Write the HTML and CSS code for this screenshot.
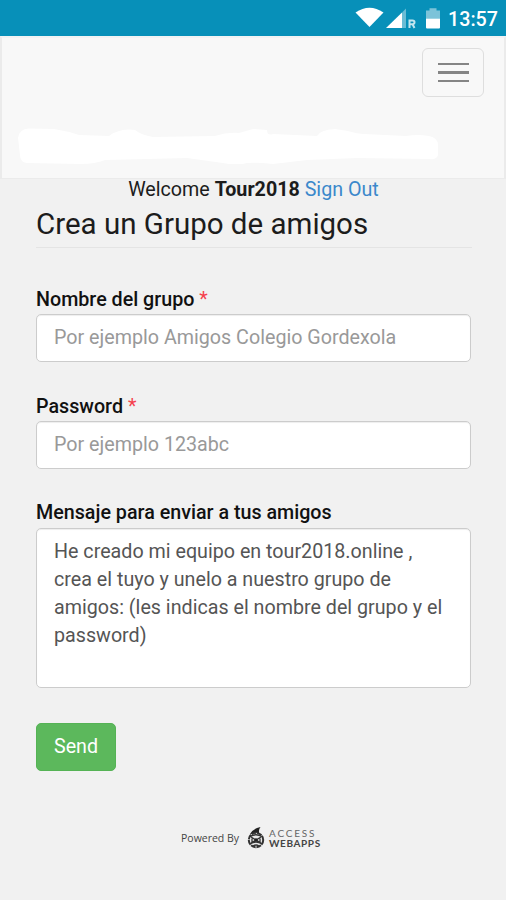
FILE: index.html
```html
<!DOCTYPE html>
<html lang="es">
<head>
<meta charset="utf-8">
<title>Crea un Grupo de amigos</title>
<link rel="stylesheet" href="styles.css">
</head>
<body>
<div class="status">
  <svg class="status-icons" viewBox="0 0 90 36" width="90" height="36" aria-hidden="true">
    <path fill="#fff" d="M4.500 12.500Q18.500 3 32.500 12.500L18.500 27Z"/>
    <path fill="#fff" d="M35 28L51 12.500V28Z"/>
    <path fill="#6bbcd5" d="M51 12.500L55 8.500V28H51Z"/>
    <path fill="none" stroke="#c3e5ef" stroke-width="2" d="M58.500 28V20.500H61.500Q63.500 20.500 63.500 22.300T61.500 24.300H59M61.500 24.300L63.500 28"/>
    <path fill="#7cc3d9" d="M75 10.500H78.500V8.300H85.500V10.500H89V18.500H75Z"/>
    <path fill="#fff" d="M75 18.500H89V27.500Q89 28.500 88 28.500H76Q75 28.500 75 27.500Z"/>
  </svg>
  <span class="clock">13:57</span>
</div>
<nav class="navbar">
  <button class="toggle" type="button" aria-label="Menu"><i></i><i></i><i></i></button>
  <svg class="brand" viewBox="0 0 424 38" width="424" height="38" aria-hidden="true">
    <path fill="#fff" d="M1 12Q2 3 12 2.500L37 3Q50 5 62 9L92 10Q99 4 112 3.500L118 4Q124 9 136 11L198 10Q210 6 222 7L236 3L250 4Q250 10 256 8L300 10Q303 4 318 3L331 5Q341 8 347 8L389 10Q401 8 412 10Q421 12 421 19V29Q420 34 412 33L340 32L290 34L256 38Q240 36 230 37Q220 40 206 37L170 32L130 33L88 34Q78 38 64 38L10 37Q3 36 3 29Z"/>
  </svg>
</nav>
<main class="content">
  <p class="welcome">Welcome <b>Tour2018</b> <a>Sign Out</a></p>
  <h1>Crea un Grupo de amigos</h1>
  <form>
    <div class="group">
      <label for="g">Nombre del grupo <span class="req">*</span></label>
      <input id="g" type="text" placeholder="Por ejemplo Amigos Colegio Gordexola">
    </div>
    <div class="group">
      <label for="p">Password <span class="req">*</span></label>
      <input id="p" type="text" placeholder="Por ejemplo 123abc">
    </div>
    <div class="group message">
      <label for="m">Mensaje para enviar a tus amigos</label>
      <textarea id="m">He creado mi equipo en tour2018.online ,
crea el tuyo y unelo a nuestro grupo de
amigos: (les indicas el nombre del grupo y el
password)</textarea>
    </div>
    <button class="send" type="button">Send</button>
  </form>
</main>
<footer class="footer">
  <span class="powered">Powered By</span>
  <svg width="18" height="22" viewBox="0 0 18 22" aria-hidden="true">
    <path fill="#222" d="M3 7Q6 1.500 13.500 0Q11 3 12.500 7Z"/>
    <circle cx="9" cy="13" r="7.200" fill="#e8e8e8" stroke="#333" stroke-width="2" stroke-dasharray="5 .8"/>
    <path fill="none" stroke="#333" stroke-width="1.300" d="M3 9.500Q9 6 15 9.500M4 10L14 16M14 10L4 16M3 17Q9 13 15 17M6 19Q9 17 12 19M5 11.500V15M13 11.500V15"/>
    <circle cx="9" cy="13" r="1.800" fill="#222"/>
  </svg>
  <span class="logo"><span class="access">ACCESS</span><span class="web">WEBAPPS</span></span>
</footer>
</body>
</html>
```
FILE: styles.css
```css
* { box-sizing: border-box; }
body {
  margin: 0;
  height: 900px;
  overflow: hidden;
  background: #f1f1f1;
  color: #1c1c1c;
  font: 19.7px/28px Roboto, sans-serif;
}
.status {
  height: 36px;
  background: #0790b9;
  display: flex;
  justify-content: flex-end;
  padding-right: 8px;
  gap: 8px;
}
.status-icons { margin-right: -1px; }
.clock {
  color: #fff;
  font-size: 19.7px;
  font-weight: 500;
  line-height: 39px;
}
.navbar {
  height: 143px;
  background: #f8f8f8;
  border: 2px solid #ebebeb;
  border-top-color: #f1f3f4;
  border-bottom-width: 1px;
  padding: 10px 20px 0 15px;
  display: flex;
  flex-direction: column;
  justify-content: space-between;
}
.toggle {
  align-self: flex-end;
  width: 62px;
  height: 49px;
  border: 1.500px solid #dedede;
  border-radius: 6px;
  background: #f8f8f8;
  padding: 0;
  display: flex;
  flex-direction: column;
  align-items: center;
  justify-content: center;
  gap: 6px;
}
.toggle i { width: 31px; height: 2.500px; background: #858585; }
.brand { display: block; margin-bottom: 14px; }
.content { padding: 0 35px 0 36px; }
.welcome { margin: 0; height: 24px; line-height: 22px; text-align: center; }
.welcome a { color: #3b88cb; }
h1 {
  margin: 0 -1px 38px 0;
  height: 45px;
  border-bottom: 1px solid #e4e4e4;
  font-size: 29.500px;
  font-weight: 400;
  line-height: 42px;
}
.group { height: 107px; }
.message { height: 223px; }
label { display: block; height: 28px; font-weight: 500; line-height: 27px; color: #111; }
.message label { line-height: 26px; }
.req { color: #f5414d; font-weight: 400; }
input, textarea {
  display: block;
  width: 100%;
  border: 1.500px solid #ccc;
  border-radius: 5px;
  background: #fff;
  box-shadow: inset 0 1px 1px rgba(0, 0, 0, .07);
  color: #555;
  font: inherit;
  outline: 0;
}
input { height: 48px; padding: 0 17px 2px; }
input::placeholder { color: #999; }
textarea { height: 160px; padding: 9px 17px; resize: none; overflow: hidden; white-space: pre; }
.send {
  display: block;
  width: 80px;
  height: 48px;
  border: 1px solid #55b355;
  border-radius: 5px;
  background: #5cb85c;
  color: #fff;
  font: inherit;
  padding: 0;
}
.footer {
  margin: 56px 0 0 181px;
  display: flex;
  color: #444;
}
.powered { width: 66px; font: 10.500px/22px "Open Sans", sans-serif; }
.logo { display: flex; flex-direction: column; margin: 0 0 0 4px; font: 10px/12px Lato, sans-serif; }
.access { height: 10px; line-height: 12px; letter-spacing: 1.800px; color: #666; }
.web { font-weight: 700; letter-spacing: .6px; }
```
